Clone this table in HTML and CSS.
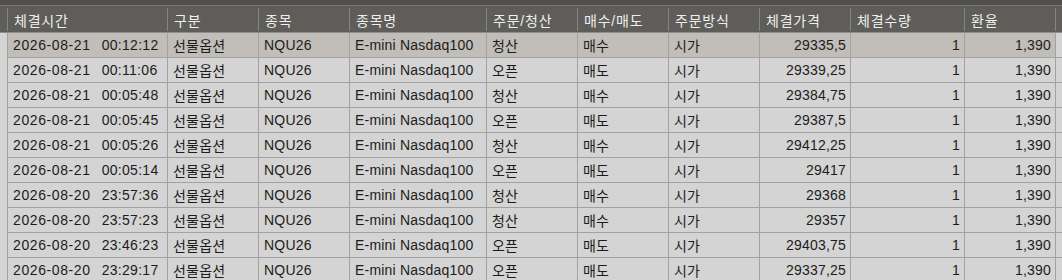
FILE: index.html
```html
<!DOCTYPE html>
<html lang="ko">
<head>
<meta charset="utf-8">
<title>체결내역</title>
<link rel="stylesheet" href="styles.css">
</head>
<body>
<div class="grid">
  <div class="topbar"></div>
  <div class="row head">
    <div class="edge"></div>
    <div class="hc">체결시간</div>
    <div class="hc">구분</div>
    <div class="hc">종목</div>
    <div class="hc">종목명</div>
    <div class="hc">주문/청산</div>
    <div class="hc">매수/매도</div>
    <div class="hc">주문방식</div>
    <div class="hc">체결가격</div>
    <div class="hc">체결수량</div>
    <div class="hc">환율</div>
    <div class="hc end"></div>
  </div>

  <div class="row sel">
    <div class="edge"></div>
    <div class="c"><span class="dt">2026-08-21</span><span class="tm">00:12:12</span></div>
    <div class="c">선물옵션</div><div class="c">NQU26</div><div class="c">E-mini Nasdaq100</div>
    <div class="c">청산</div><div class="c">매수</div><div class="c">시가</div>
    <div class="c num">29335,5</div><div class="c num">1</div><div class="c num">1,390</div>
    <div class="c end"></div>
  </div>
  <div class="row">
    <div class="edge"></div>
    <div class="c"><span class="dt">2026-08-21</span><span class="tm">00:11:06</span></div>
    <div class="c">선물옵션</div><div class="c">NQU26</div><div class="c">E-mini Nasdaq100</div>
    <div class="c">오픈</div><div class="c">매도</div><div class="c">시가</div>
    <div class="c num">29339,25</div><div class="c num">1</div><div class="c num">1,390</div>
    <div class="c end"></div>
  </div>
  <div class="row">
    <div class="edge"></div>
    <div class="c"><span class="dt">2026-08-21</span><span class="tm">00:05:48</span></div>
    <div class="c">선물옵션</div><div class="c">NQU26</div><div class="c">E-mini Nasdaq100</div>
    <div class="c">청산</div><div class="c">매수</div><div class="c">시가</div>
    <div class="c num">29384,75</div><div class="c num">1</div><div class="c num">1,390</div>
    <div class="c end"></div>
  </div>
  <div class="row">
    <div class="edge"></div>
    <div class="c"><span class="dt">2026-08-21</span><span class="tm">00:05:45</span></div>
    <div class="c">선물옵션</div><div class="c">NQU26</div><div class="c">E-mini Nasdaq100</div>
    <div class="c">오픈</div><div class="c">매도</div><div class="c">시가</div>
    <div class="c num">29387,5</div><div class="c num">1</div><div class="c num">1,390</div>
    <div class="c end"></div>
  </div>
  <div class="row">
    <div class="edge"></div>
    <div class="c"><span class="dt">2026-08-21</span><span class="tm">00:05:26</span></div>
    <div class="c">선물옵션</div><div class="c">NQU26</div><div class="c">E-mini Nasdaq100</div>
    <div class="c">청산</div><div class="c">매수</div><div class="c">시가</div>
    <div class="c num">29412,25</div><div class="c num">1</div><div class="c num">1,390</div>
    <div class="c end"></div>
  </div>
  <div class="row">
    <div class="edge"></div>
    <div class="c"><span class="dt">2026-08-21</span><span class="tm">00:05:14</span></div>
    <div class="c">선물옵션</div><div class="c">NQU26</div><div class="c">E-mini Nasdaq100</div>
    <div class="c">오픈</div><div class="c">매도</div><div class="c">시가</div>
    <div class="c num">29417</div><div class="c num">1</div><div class="c num">1,390</div>
    <div class="c end"></div>
  </div>
  <div class="row">
    <div class="edge"></div>
    <div class="c"><span class="dt">2026-08-20</span><span class="tm">23:57:36</span></div>
    <div class="c">선물옵션</div><div class="c">NQU26</div><div class="c">E-mini Nasdaq100</div>
    <div class="c">청산</div><div class="c">매수</div><div class="c">시가</div>
    <div class="c num">29368</div><div class="c num">1</div><div class="c num">1,390</div>
    <div class="c end"></div>
  </div>
  <div class="row">
    <div class="edge"></div>
    <div class="c"><span class="dt">2026-08-20</span><span class="tm">23:57:23</span></div>
    <div class="c">선물옵션</div><div class="c">NQU26</div><div class="c">E-mini Nasdaq100</div>
    <div class="c">청산</div><div class="c">매수</div><div class="c">시가</div>
    <div class="c num">29357</div><div class="c num">1</div><div class="c num">1,390</div>
    <div class="c end"></div>
  </div>
  <div class="row">
    <div class="edge"></div>
    <div class="c"><span class="dt">2026-08-20</span><span class="tm">23:46:23</span></div>
    <div class="c">선물옵션</div><div class="c">NQU26</div><div class="c">E-mini Nasdaq100</div>
    <div class="c">오픈</div><div class="c">매도</div><div class="c">시가</div>
    <div class="c num">29403,75</div><div class="c num">1</div><div class="c num">1,390</div>
    <div class="c end"></div>
  </div>
  <div class="row">
    <div class="edge"></div>
    <div class="c"><span class="dt">2026-08-20</span><span class="tm">23:29:17</span></div>
    <div class="c">선물옵션</div><div class="c">NQU26</div><div class="c">E-mini Nasdaq100</div>
    <div class="c">오픈</div><div class="c">매도</div><div class="c">시가</div>
    <div class="c num">29337,25</div><div class="c num">1</div><div class="c num">1,390</div>
    <div class="c end"></div>
  </div>
</div>
</body>
</html>
```

FILE: styles.css
```css
html, body {
  margin: 0;
  padding: 0;
  background: #d4d4d4;
}
body {
  width: 1062px;
  height: 280px;
  overflow: hidden;
  font-family: "Liberation Sans", "Noto Sans CJK KR", sans-serif;
  font-size: 14px;
  color: #1c1c1c;
  letter-spacing: 0.2px;
}
.grid {
  display: flex;
  flex-direction: column;
}
.topbar {
  height: 5px;
  background: #51504c;
  border-bottom: 1px solid #77766f;
}
.row {
  display: grid;
  grid-template-columns: 7px 160px 91px 91px 137px 91px 91px 91px 91px 114px 91px 7px;
  height: 25px;
  flex: none;
}
.head {
  height: 26px;
  background: #5e5d59;
  border-bottom: 1px solid #8f8e8a;
}
.hc {
  color: #efefef;
  display: flex;
  align-items: center;
  padding-left: 6px;
  margin: 2px 0 1px;
  border-left: 1px solid #858480;
  white-space: nowrap;
  letter-spacing: 0.8px;
}
.edge {
  background: #d4d4d4;
}
.head .edge {
  background: transparent;
}
.c {
  display: flex;
  align-items: center;
  padding-left: 5px;
  border-left: 1px solid #a2a2a2;
  border-bottom: 1px solid #a2a2a2;
  background: #d4d4d4;
  white-space: nowrap;
  overflow: hidden;
  height: 25px;
  box-sizing: border-box;
}
.sel .c {
  background: #c1bdb9;
}
.sel .c.end {
  background: #d4d4d4;
}
.c.num {
  justify-content: flex-end;
  padding-left: 0;
  padding-right: 4px;
}
.dt {
  letter-spacing: 0.6px;
}
.tm {
  margin-left: 11px;
  letter-spacing: 0.3px;
}
```
